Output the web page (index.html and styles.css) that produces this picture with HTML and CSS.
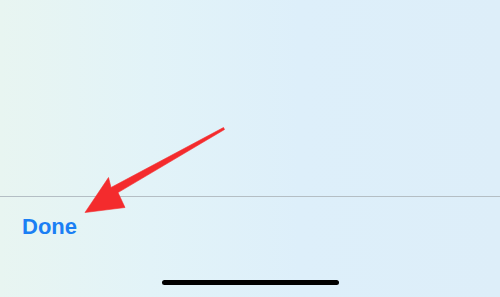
FILE: index.html
```html
<!DOCTYPE html>
<html>
<head>
<meta charset="utf-8">
<link rel="stylesheet" href="styles.css">
</head>
<body>
<div class="screen">
  <div class="content"></div>
  <div class="toolbar">
    <span class="done">Done</span>
  </div>
  <div class="home-area">
    <div class="home-indicator"></div>
  </div>
  <svg class="arrow" width="500" height="297" viewBox="0 0 500 297">
    <polygon points="223.5,127.5 111,187.5 108.5,177.5 85,212.5 125,207.5 118,192.6 224.5,129.5" fill="#f42b2d" stroke="#f42b2d" stroke-width="0.6" stroke-linejoin="round"/>
  </svg>
</div>
</body>
</html>
```
FILE: styles.css
```css
html, body {
  margin: 0;
  padding: 0;
}
body {
  width: 500px;
  height: 297px;
  overflow: hidden;
  font-family: "Liberation Sans", Arial, sans-serif;
}
.screen {
  position: relative;
  width: 500px;
  height: 297px;
  background: linear-gradient(90deg, #e8f5f1 0%, #e2f3f8 30%, #ddeffa 60%, #ddeef9 100%);
  display: flex;
  flex-direction: column;
}
.content {
  height: 196px;
  border-bottom: 1px solid #b4bec4;
}
.toolbar {
  box-sizing: border-box;
  height: 48px;
  padding: 17px 0 0 22px;
}
.done {
  display: block;
  font-size: 22px;
  line-height: 25px;
  font-weight: 700;
  color: #1b7ff4;
}
.home-area {
  flex: 1;
  display: flex;
  justify-content: center;
  padding-top: 35px;
}
.home-indicator {
  width: 177px;
  height: 5px;
  border-radius: 3px;
  background: #000;
}
.arrow {
  position: absolute;
  left: 0;
  top: 0;
}
```
